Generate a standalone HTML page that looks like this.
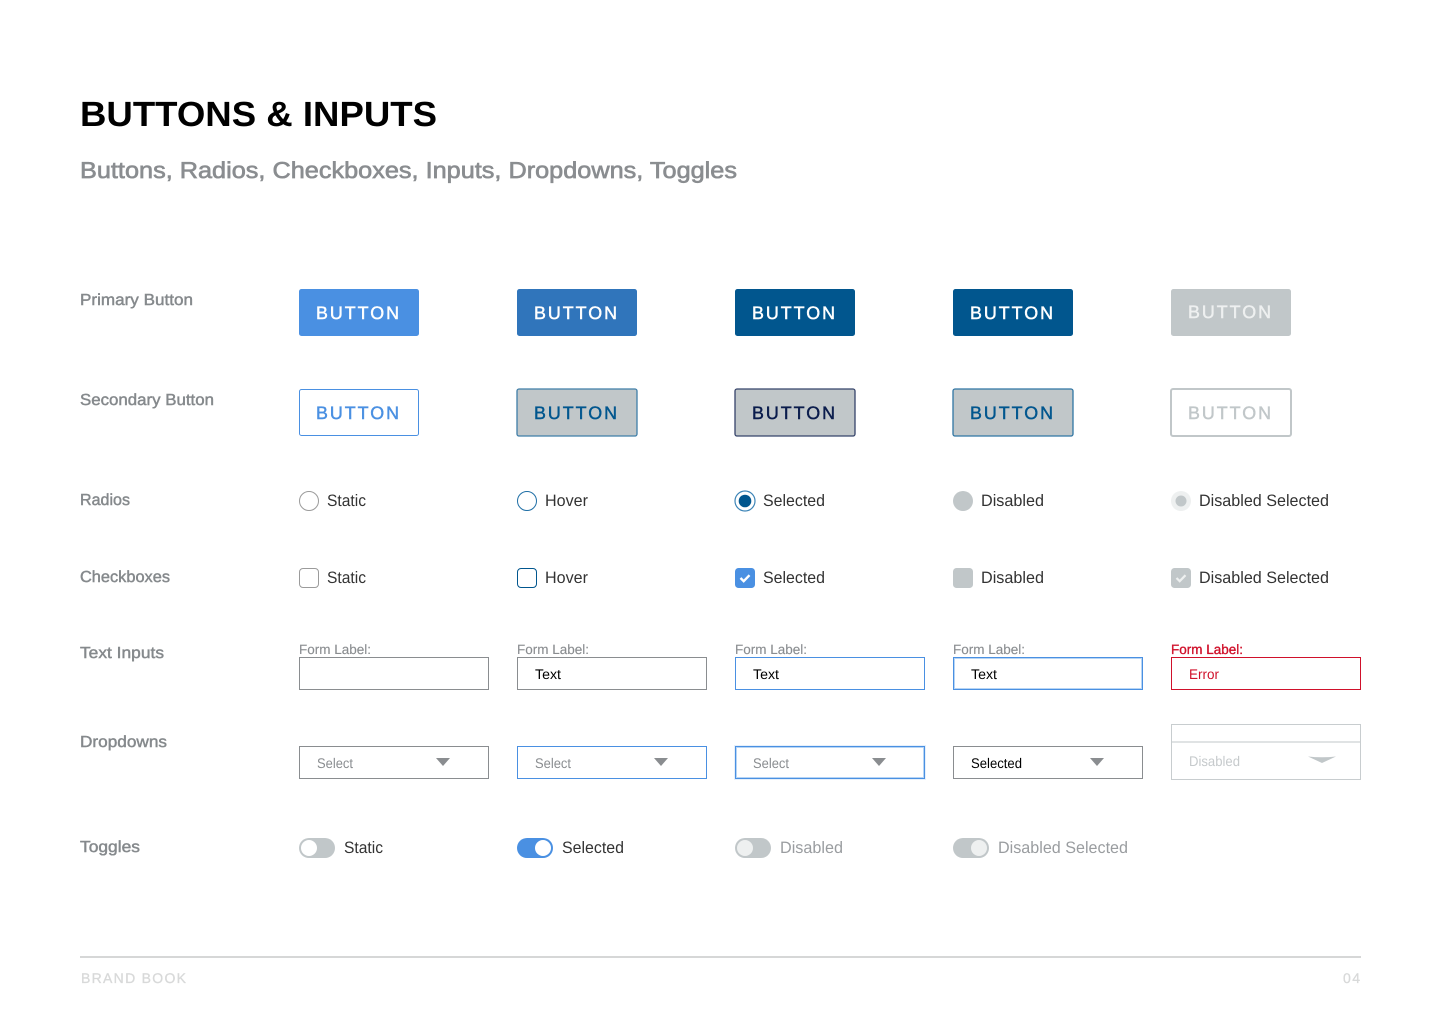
<!DOCTYPE html>
<html lang="en">
<head>
<meta charset="utf-8">
<title>Buttons &amp; Inputs</title>
<style>
html,body{margin:0;padding:0;background:#fff;width:1440px;height:1024px;overflow:hidden}
svg{display:block}
text{font-family:"Liberation Sans",sans-serif;text-rendering:geometricPrecision}
.rl{font-size:16px;fill:#85898c;stroke:#85898c;stroke-width:.45px}
.b{font-size:18px;stroke-width:.45px;letter-spacing:2px}
.t{font-size:16.5px;fill:#333}
.fl{font-size:13.5px;fill:#8a8d90;stroke:#8a8d90;stroke-width:.12px}
.i{font-size:14px;fill:#000}
.s{font-size:14px;fill:#8a8d90}
</style>
</head>
<body>
<svg width="1440" height="1024" viewBox="0 0 1440 1024" xmlns="http://www.w3.org/2000/svg">
<rect width="1440" height="1024" fill="#fff"/>

<text x="80" y="126" font-size="35" font-weight="700" fill="#000" textLength="357" lengthAdjust="spacingAndGlyphs">BUTTONS &amp; INPUTS</text>
<text x="80" y="178" font-size="23" fill="#8a8d90" stroke="#8a8d90" stroke-width=".65" textLength="657" lengthAdjust="spacingAndGlyphs">Buttons, Radios, Checkboxes, Inputs, Dropdowns, Toggles</text>

<text class="rl" x="80" y="305" textLength="113" lengthAdjust="spacingAndGlyphs">Primary Button</text>
<text class="rl" x="80" y="405" textLength="134" lengthAdjust="spacingAndGlyphs">Secondary Button</text>
<text class="rl" x="80" y="505" textLength="50" lengthAdjust="spacingAndGlyphs">Radios</text>
<text class="rl" x="80" y="582" textLength="90" lengthAdjust="spacingAndGlyphs">Checkboxes</text>
<text class="rl" x="80" y="658" textLength="84" lengthAdjust="spacingAndGlyphs">Text Inputs</text>
<text class="rl" x="80" y="747" textLength="87" lengthAdjust="spacingAndGlyphs">Dropdowns</text>
<text class="rl" x="80" y="852" textLength="60" lengthAdjust="spacingAndGlyphs">Toggles</text>

<!-- Primary buttons -->
<rect x="299" y="289" width="120" height="47" rx="2.5" fill="#4a90e2"/>
<rect x="517" y="289" width="120" height="47" rx="2.5" fill="#3075bb"/>
<rect x="735" y="289" width="120" height="47" rx="2.5" fill="#01568e"/>
<rect x="953" y="289" width="120" height="47" rx="2.5" fill="#01568e"/>
<rect x="1171" y="289" width="120" height="47" rx="2.5" fill="#c1c7c9"/>
<text class="b" x="316" y="319" fill="#fff" stroke="#fff" textLength="85" lengthAdjust="spacingAndGlyphs">BUTTON</text>
<text class="b" x="534" y="319" fill="#fff" stroke="#fff" textLength="85" lengthAdjust="spacingAndGlyphs">BUTTON</text>
<text class="b" x="752" y="319" fill="#fff" stroke="#fff" textLength="85" lengthAdjust="spacingAndGlyphs">BUTTON</text>
<text class="b" x="970" y="319" fill="#fff" stroke="#fff" textLength="85" lengthAdjust="spacingAndGlyphs">BUTTON</text>
<text class="b" x="1188" y="318" fill="#eef0f0" stroke="#eef0f0" textLength="85" lengthAdjust="spacingAndGlyphs">BUTTON</text>

<!-- Secondary buttons -->
<rect x="299.5" y="389.5" width="119" height="46" rx="2" fill="#fff" stroke="#4a90e2"/>
<rect x="517" y="389" width="120" height="47" rx="2" fill="#c1c7c9" stroke="#3f7ea8" stroke-width="1.3"/>
<rect x="735" y="389" width="120" height="47" rx="2" fill="#c1c7c9" stroke="#35436a" stroke-width="1.3"/>
<rect x="953" y="389" width="120" height="47" rx="2" fill="#c1c7c9" stroke="#2f75a3" stroke-width="1.3"/>
<rect x="1171" y="389" width="120" height="47" rx="2" fill="#fff" stroke="#c1c7c9" stroke-width="2"/>
<text class="b" x="316" y="419" fill="#4a90e2" stroke="#4a90e2" textLength="85" lengthAdjust="spacingAndGlyphs">BUTTON</text>
<text class="b" x="534" y="419" fill="#01568e" stroke="#01568e" textLength="85" lengthAdjust="spacingAndGlyphs">BUTTON</text>
<text class="b" x="752" y="419" fill="#0a1c4c" stroke="#0a1c4c" textLength="85" lengthAdjust="spacingAndGlyphs">BUTTON</text>
<text class="b" x="970" y="419" fill="#01568e" stroke="#01568e" textLength="85" lengthAdjust="spacingAndGlyphs">BUTTON</text>
<text class="b" x="1188" y="419" fill="#c1c7c9" stroke="#c1c7c9" textLength="85" lengthAdjust="spacingAndGlyphs">BUTTON</text>

<!-- Radios -->
<circle cx="309" cy="501" r="9.5" fill="#fff" stroke="#9b9b9b"/>
<circle cx="527" cy="501" r="9.5" fill="#fff" stroke="#1f6fa6"/>
<circle cx="745" cy="501" r="10" fill="#fff" stroke="#3f86b8" stroke-width="1.2"/>
<circle cx="745" cy="501" r="6.300" fill="#01568e"/>
<circle cx="963" cy="501" r="10" fill="#c1c7c9"/>
<circle cx="1181" cy="501" r="10" fill="#eef0f0"/>
<circle cx="1181" cy="501" r="5.500" fill="#c1c7c9"/>
<text class="t" x="327" y="506" textLength="39" lengthAdjust="spacingAndGlyphs">Static</text>
<text class="t" x="545" y="506" textLength="43" lengthAdjust="spacingAndGlyphs">Hover</text>
<text class="t" x="763" y="506" textLength="62" lengthAdjust="spacingAndGlyphs">Selected</text>
<text class="t" x="981" y="506" textLength="63" lengthAdjust="spacingAndGlyphs">Disabled</text>
<text class="t" x="1199" y="506" textLength="130" lengthAdjust="spacingAndGlyphs">Disabled Selected</text>

<!-- Checkboxes -->
<rect x="299.5" y="568.5" width="19" height="19" rx="3.5" fill="#fff" stroke="#9b9b9b"/>
<rect x="517.5" y="568.5" width="19" height="19" rx="3.5" fill="#fff" stroke="#01568e"/>
<rect x="735" y="568" width="20" height="20" rx="3.5" fill="#4a90e2"/>
<path d="M740.500 578l3.200 3.200 5.800-6" fill="none" stroke="#fff" stroke-width="2.400"/>
<rect x="953" y="568" width="20" height="20" rx="3.5" fill="#c1c7c9"/>
<rect x="1171" y="568" width="20" height="20" rx="3.5" fill="#c1c7c9"/>
<path d="M1176.500 578l3.200 3.200 5.800-6" fill="none" stroke="#eef0f0" stroke-width="2.200"/>
<text class="t" x="327" y="583" textLength="39" lengthAdjust="spacingAndGlyphs">Static</text>
<text class="t" x="545" y="583" textLength="43" lengthAdjust="spacingAndGlyphs">Hover</text>
<text class="t" x="763" y="583" textLength="62" lengthAdjust="spacingAndGlyphs">Selected</text>
<text class="t" x="981" y="583" textLength="63" lengthAdjust="spacingAndGlyphs">Disabled</text>
<text class="t" x="1199" y="583" textLength="130" lengthAdjust="spacingAndGlyphs">Disabled Selected</text>

<!-- Text inputs -->
<text class="fl" x="299" y="654" textLength="72" lengthAdjust="spacingAndGlyphs">Form Label:</text>
<text class="fl" x="517" y="654" textLength="72" lengthAdjust="spacingAndGlyphs">Form Label:</text>
<text class="fl" x="735" y="654" textLength="72" lengthAdjust="spacingAndGlyphs">Form Label:</text>
<text class="fl" x="953" y="654" textLength="72" lengthAdjust="spacingAndGlyphs">Form Label:</text>
<text x="1171" y="654" font-size="13.5" fill="#d0112b" stroke="#d0112b" stroke-width=".35" textLength="72" lengthAdjust="spacingAndGlyphs">Form Label:</text>
<rect x="299.5" y="657.5" width="189" height="32" fill="#fff" stroke="#8a8d90"/>
<rect x="517.5" y="657.5" width="189" height="32" fill="#fff" stroke="#8a8d90"/>
<rect x="735.5" y="657.5" width="189" height="32" fill="#fff" stroke="#4a90e2"/>
<rect x="953.5" y="657.5" width="189" height="32" fill="#fff" stroke="#4a90e2"/>
<rect x="954.5" y="658.5" width="187" height="30" fill="none" stroke="#b7d5f5"/>
<rect x="1171.5" y="657.5" width="189" height="32" fill="#fff" stroke="#d0112b"/>
<text class="i" x="535" y="679" textLength="26" lengthAdjust="spacingAndGlyphs">Text</text>
<text class="i" x="753" y="679" textLength="26" lengthAdjust="spacingAndGlyphs">Text</text>
<text class="i" x="971" y="679" textLength="26" lengthAdjust="spacingAndGlyphs">Text</text>
<text class="i" x="1189" y="679" style="fill:#d0112b" textLength="30" lengthAdjust="spacingAndGlyphs">Error</text>

<!-- Dropdowns -->
<rect x="299.5" y="746.5" width="189" height="32" fill="#fff" stroke="#8a8d90"/>
<rect x="517.5" y="746.5" width="189" height="32" fill="#fff" stroke="#4a90e2"/>
<rect x="734.5" y="745.5" width="191" height="34" fill="none" stroke="#e6f0fb"/>
<rect x="735.5" y="746.5" width="189" height="32" fill="#fff" stroke="#4a90e2"/>
<rect x="736.5" y="747.5" width="187" height="30" fill="none" stroke="#b7d5f5"/>
<rect x="953.5" y="746.5" width="189" height="32" fill="#fff" stroke="#8a8d90"/>
<text class="s" x="317" y="768" textLength="36" lengthAdjust="spacingAndGlyphs">Select</text>
<text class="s" x="535" y="768" textLength="36" lengthAdjust="spacingAndGlyphs">Select</text>
<text class="s" x="753" y="768" textLength="36" lengthAdjust="spacingAndGlyphs">Select</text>
<text class="i" x="971" y="768" textLength="51" lengthAdjust="spacingAndGlyphs">Selected</text>
<path d="M436 758h14l-7 8z" fill="#8a8d90"/>
<path d="M654 758h14l-7 8z" fill="#8a8d90"/>
<path d="M872 758h14l-7 8z" fill="#8a8d90"/>
<path d="M1090 758h14l-7 8z" fill="#8a8d90"/>
<rect x="1171.5" y="724.5" width="189" height="55" fill="#fff" stroke="#c8cdcf"/>
<rect x="1172" y="741" width="188" height="2" fill="#e0e3e4"/>
<text class="s" x="1189" y="766" style="fill:#c6cacc" textLength="51" lengthAdjust="spacingAndGlyphs">Disabled</text>
<path d="M1308 756.500q14 1.500 28 0l-14 6.500z" fill="#c1c7c9"/>

<!-- Toggles -->
<rect x="299" y="838" width="36" height="20" rx="10" fill="#c1c7c9"/>
<circle cx="309" cy="848" r="8" fill="#fff"/>
<rect x="517" y="838" width="36" height="20" rx="10" fill="#4a90e2"/>
<circle cx="543" cy="848" r="8" fill="#fff"/>
<rect x="735" y="838" width="36" height="20" rx="10" fill="#c1c7c9"/>
<circle cx="745" cy="848" r="8" fill="#eef0f0"/>
<rect x="953" y="838" width="36" height="20" rx="10" fill="#c1c7c9"/>
<circle cx="979" cy="848" r="8" fill="#eef0f0"/>
<text class="t" x="344" y="853" textLength="39" lengthAdjust="spacingAndGlyphs">Static</text>
<text class="t" x="562" y="853" textLength="62" lengthAdjust="spacingAndGlyphs">Selected</text>
<text class="t" x="780" y="853" style="fill:#9a9da0" textLength="63" lengthAdjust="spacingAndGlyphs">Disabled</text>
<text class="t" x="998" y="853" style="fill:#9a9da0" textLength="130" lengthAdjust="spacingAndGlyphs">Disabled Selected</text>

<!-- Footer -->
<rect x="80" y="956" width="1281" height="2" fill="#d6d7d7"/>
<text x="81" y="983" font-size="14" fill="#d8d9d9" stroke="#d8d9d9" stroke-width=".3" textLength="105" lengthAdjust="spacing">BRAND BOOK</text>
<text x="1343" y="983" font-size="14" fill="#d8d9d9" stroke="#d8d9d9" stroke-width=".3" textLength="17" lengthAdjust="spacing">04</text>
</svg>
</body>
</html>
